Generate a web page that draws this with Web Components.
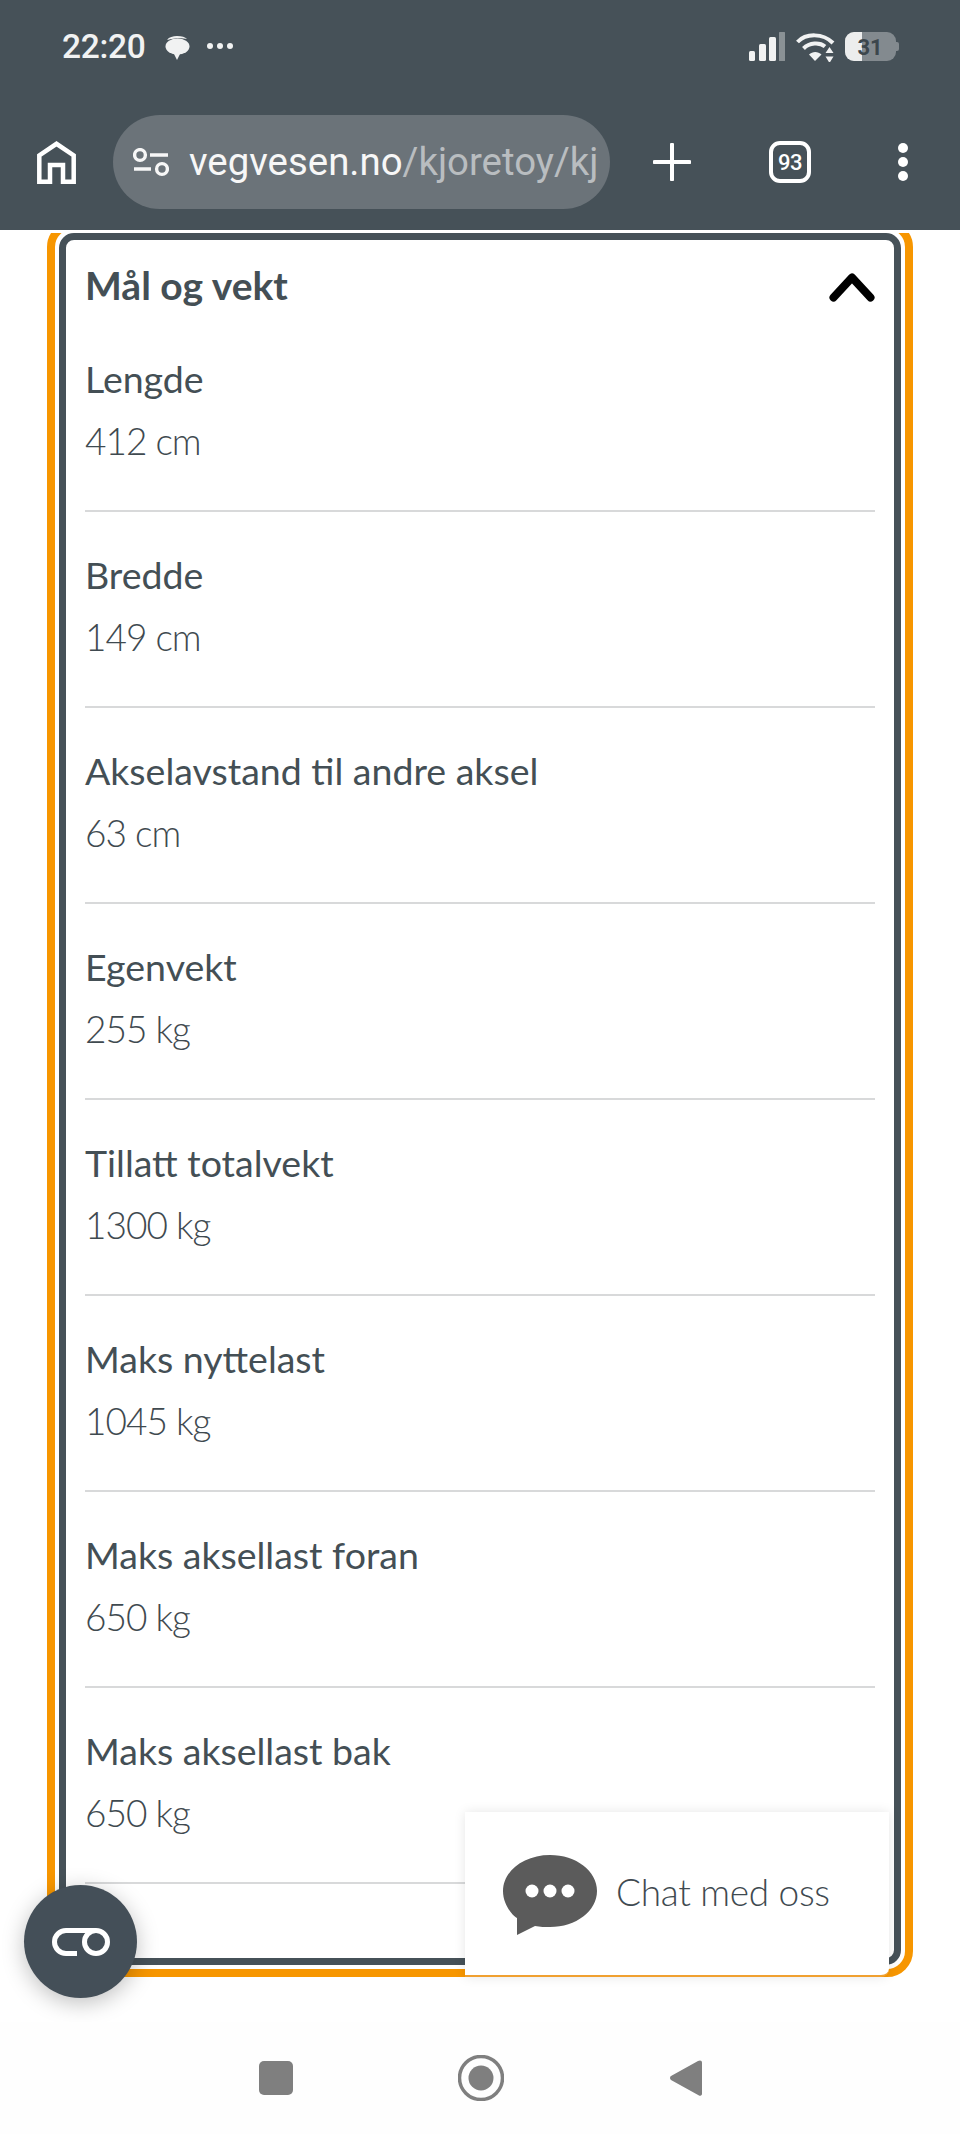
<!DOCTYPE html>
<html lang="no"><head><meta charset="utf-8"><title>Mål og vekt</title>
<style>html,body{margin:0;padding:0;background:#fff}body{width:960px;height:2134px;overflow:hidden;font-family:Lato,"Liberation Sans",sans-serif;color:#444f55}</style>
</head><body>
<phone-screen>
 <browser-bar></browser-bar>
 <page-view>
  <spec-panel title="Mål og vekt">
   <spec-row label="Lengde" value="412 cm"></spec-row>
   <spec-row label="Bredde" value="149 cm"></spec-row>
   <spec-row label="Akselavstand til andre aksel" value="63 cm"></spec-row>
   <spec-row label="Egenvekt" value="255 kg"></spec-row>
   <spec-row label="Tillatt totalvekt" value="1300 kg"></spec-row>
   <spec-row label="Maks nyttelast" value="1045 kg"></spec-row>
   <spec-row label="Maks aksellast foran" value="650 kg"></spec-row>
   <spec-row label="Maks aksellast bak" value="650 kg"></spec-row>
  </spec-panel>
 </page-view>
 <nav-bar></nav-bar>
</phone-screen>
<script>
function def(name,css,html){customElements.define(name,class extends HTMLElement{constructor(){super();const r=this.attachShadow({mode:'open'});r.innerHTML='<style>'+css+'</style>'+(typeof html==='function'?html(this):html);}})}
def('phone-screen',':host{display:flex;flex-direction:column;width:960px;height:2134px}','<slot></slot>');
def('browser-bar',`:host{display:flex;flex-direction:column;height:230px;background:#465158;color:#fff;box-sizing:border-box;position:relative;z-index:2}
.status{display:flex;align-items:center;height:94px;padding:0 0 0 62px}
.time{font:500 33.5px/40px Roboto,sans-serif;color:#f1f2f2;margin-right:18px;letter-spacing:-.3px;position:relative;top:0}
.spacer{flex:1}
.st{display:flex;align-items:center;padding-right:61px}
.tools{display:flex;align-items:center;height:94px;padding-left:37px;margin-top:21px}
.pill{width:497px;height:94px;margin-left:36px;border-radius:47px;background:#6b7379;display:flex;align-items:center;padding-left:20px;box-sizing:border-box}
.url{font:400 38.4px/48px Roboto,sans-serif;white-space:nowrap;margin-left:20px;color:#b9bdc0}
.url b{font-weight:400;color:#f7f7f7}
svg{display:block;flex:none}
.plus{margin-left:43px}.tabs{margin-left:78px;position:relative}.more{margin-left:87px}
.n{position:absolute;inset:0;display:flex;align-items:center;justify-content:center;font:500 22px Roboto,sans-serif;color:#fff;letter-spacing:-.4px}`,
`<div class="status"><span class="time">22:20</span>
<svg width="26" height="25" viewBox="0 0 26 25" style="margin-right:17px"><path d="M3 5C5 2 9 1 13 1c5 0 8 1 10 3-5-1-13-1-20 1z" fill="#f1f2f2"/><ellipse cx="13.500" cy="11.500" rx="12" ry="8" fill="#f1f2f2"/><path d="M9 17l7 2-3 6z" fill="#f1f2f2"/></svg>
<svg width="26" height="8" viewBox="0 0 26 8" style="margin-top:-2px"><g fill="#f1f2f2"><circle cx="3" cy="4" r="3"/><circle cx="13" cy="4" r="3"/><circle cx="23" cy="4" r="3"/></g></svg>
<span class="spacer"></span>
<div class="st">
<svg width="36" height="30" viewBox="0 0 36 30"><g fill="#f1f2f2"><rect x="0" y="19" width="6" height="10" rx="1.500"/><rect x="10" y="12" width="7" height="17" rx="1.500"/><rect x="20" y="5" width="7" height="24" rx="1.500"/></g><rect x="30" y="0" width="6" height="29" rx=".5" fill="#8a9195"/></svg>
<svg width="39" height="30" viewBox="0 0 39 30" style="margin-left:11px"><g fill="none" stroke="#f1f2f2" stroke-width="4"><path d="M1.500 10C10 1 27 1 37 11"/><path d="M7.500 16.500c6-6 16-6.500 21.500-2"/></g><path d="M13 22.500c3.500-3.500 9-3.500 12.500 0L19 29z" fill="#f1f2f2"/><path d="M33.500 15l4 6h-8zM33.500 31l-4-6.500h8z" fill="#f1f2f2"/></svg>
<svg width="54" height="30" viewBox="0 0 54 30" style="margin-left:10px"><rect width="51" height="29" rx="9" fill="#838a8f"/><path d="M9 0h8v29H9a9 9 0 0 1-9-9V9a9 9 0 0 1 9-9z" fill="#eceded"/><path d="M51 10h1a2 2 0 0 1 2 2v5a2 2 0 0 1-2 2h-1z" fill="#838a8f"/><text x="25" y="23" text-anchor="middle" font-family="Roboto,sans-serif" font-weight="700" font-size="22" fill="#3c464c">31</text></svg>
</div></div>
<div class="tools">
<svg width="39" height="43" viewBox="0 0 39 43" style="margin-top:1px;margin-right:1px"><path d="M2.300 40.700V14.500L19.500 2.800 36.700 14.500V40.700H26V24H13V40.700z" fill="none" stroke="#fff" stroke-width="4.500"/></svg>
<div class="pill">
<svg width="36" height="29" viewBox="0 0 36 29"><g fill="none" stroke="#f7f7f7" stroke-width="3.400"><circle cx="7" cy="7" r="5.400"/><circle cx="29" cy="21" r="5.400"/><path d="M17 7h18M1 21h17"/></g></svg>
<div class="url"><b>vegvesen.no</b>/kjoretoy/kj</div>
</div>
<svg class="plus" width="38" height="38" viewBox="0 0 38 38"><path d="M19 1.500v35M1.500 19h35" stroke="#fff" stroke-width="4" stroke-linecap="round"/></svg>
<div class="tabs"><svg width="42" height="42" viewBox="0 0 42 42"><rect x="2" y="2" width="38" height="38" rx="9" fill="none" stroke="#fff" stroke-width="4"/></svg><span class="n">93</span></div>
<svg class="more" width="10" height="38" viewBox="0 0 10 38"><g fill="#fff"><circle cx="5" cy="5" r="5"/><circle cx="5" cy="19" r="5"/><circle cx="5" cy="33" r="5"/></g></svg>
</div>`);
def('page-view',`:host{display:block;position:relative;border-top:3px solid #fff;overflow:hidden;background:#fff;height:1789px}
.fab{position:absolute;left:24px;top:1652px;width:113px;height:113px;border-radius:50%;background:#444f58;box-shadow:0 5px 22px rgba(0,0,0,.25);display:flex;align-items:center;justify-content:center}
.chat{position:absolute;left:465px;top:1579px;width:424px;height:165px;box-sizing:border-box;background:#fff;border-bottom:2px solid #f0a030;border-bottom-right-radius:8px;box-shadow:0 0 12px rgba(0,0,0,.1);display:flex;align-items:center;padding:0 0 0 38px;font:300 37px/44px Lato,sans-serif;color:#3f4a50;letter-spacing:-.3px}
.chat svg{margin-right:18px;margin-top:2px}.chat span{margin-top:-4px}`,
`<slot></slot>
<div class="fab"><svg width="58" height="28" viewBox="0 0 58 28"><g fill="none" stroke="#fff" stroke-width="5"><path d="M25 25.500H14a11.500 11.500 0 0 1 0-23H44"/><circle cx="44" cy="14" r="11.500"/></g></svg></div>
<div class="chat"><svg width="95" height="82" viewBox="0 0 95 82"><path d="M47 1C21 1 0 17 0 37c0 14 10 25 14 27v17l18-9c5 1 10 1 15 1 26 0 47-16 47-36S73 1 47 1z" fill="#5b5b5b"/><g fill="#fff"><circle cx="29" cy="37" r="6.500"/><circle cx="47" cy="37" r="6.500"/><circle cx="65" cy="37" r="6.500"/></g></svg><span>Chat med oss</span></div>`);
def('spec-panel',`:host{display:block;margin:-12px 47px 0;border:8px solid #f79600;border-radius:26px;padding:4px;box-sizing:border-box;height:1756px;background:#fff}
.in{border:7px solid #465158;border-radius:15px;height:100%;box-sizing:border-box;padding:0 19px;overflow:hidden}
.h{display:flex;justify-content:space-between;align-items:center;height:78px}
h2{margin:0;font:700 39px/44px Lato,sans-serif;color:#444f55;position:relative;top:6px}
svg{position:relative;top:8px}
.list{margin-top:-2px}`,
t=>`<div class="in"><div class="h"><h2>${t.getAttribute('title')}</h2><svg width="46" height="30" viewBox="0 0 46 30"><path d="M4.500 25.500L23 5.500 41.500 25.500" fill="none" stroke="#000" stroke-width="8" stroke-linecap="round" stroke-linejoin="round"/></svg></div><div class="list"><slot></slot></div></div>`);
def('spec-row',`:host{display:block;height:194px;border-bottom:2px solid #d8d9da}
.l{font:400 37.5px/44px Lato,sans-serif;color:#444f55;padding-top:41px}
.v{font:300 37px/44px Lato,sans-serif;color:#3f4a50;margin-top:18px;letter-spacing:-1px}`,
t=>`<div class="l">${t.getAttribute('label')}</div><div class="v">${t.getAttribute('value')}</div>`);
def('nav-bar',`:host{display:flex;align-items:center;justify-content:center;height:112px;background:#fefefe}
svg{display:block}`,
`<svg width="34" height="34" viewBox="0 0 34 34" style="margin-right:165px"><rect width="34" height="34" rx="5" fill="#7f7f7f"/></svg>
<svg width="46" height="46" viewBox="0 0 46 46" style="margin-right:166px"><circle cx="23" cy="23" r="21.500" fill="none" stroke="#7f7f7f" stroke-width="3.500"/><circle cx="23" cy="23" r="12.500" fill="#7f7f7f"/></svg>
<svg width="32" height="38" viewBox="0 0 32 38"><path d="M30 1.500a2 2 0 0 1 2 2V35a2 2 0 0 1-3 1.500L1 21a2.500 2.500 0 0 1 0-4L28 2z" fill="#7f7f7f"/></svg>`);
</script>
</body></html>
